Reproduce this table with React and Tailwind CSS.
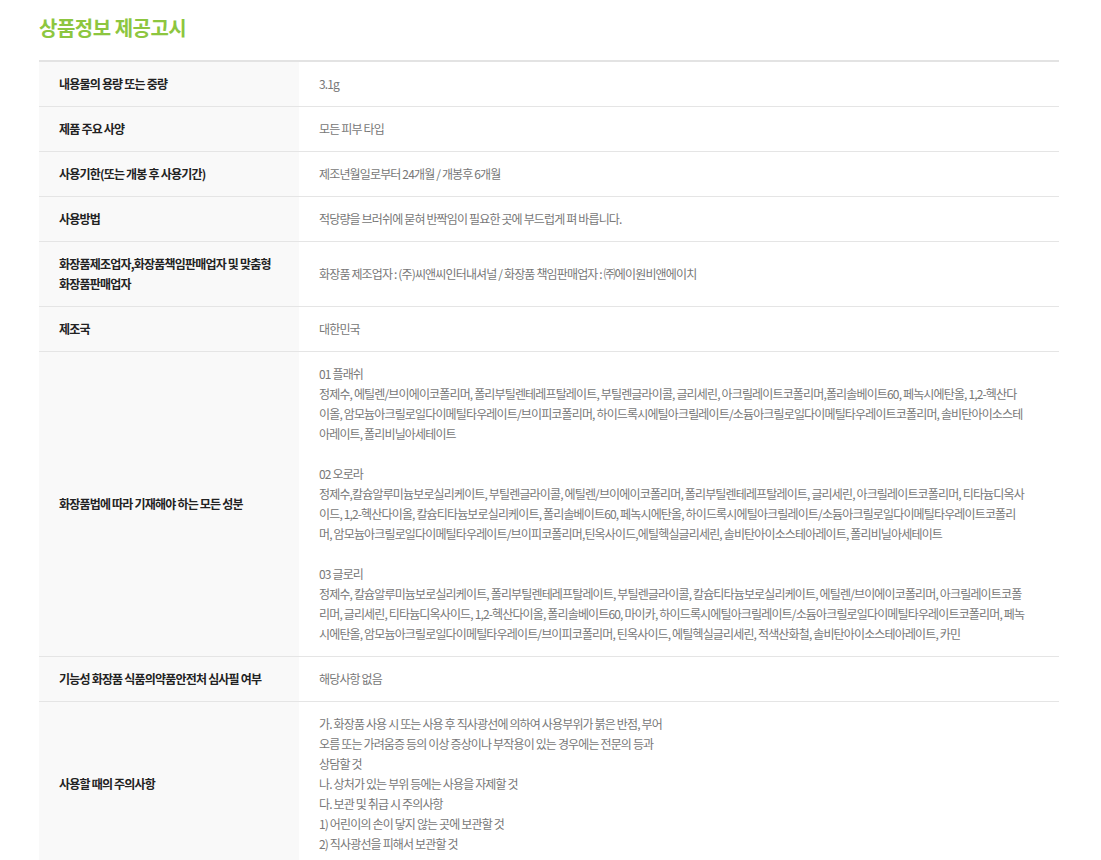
const rows = [
  { label: ['내용물의 용량 또는 중량'], value: ['3.1g'] },
  { label: ['제품 주요 사양'], value: ['모든 피부 타입'] },
  { label: ['사용기한(또는 개봉 후 사용기간)'], value: ['제조년월일로부터 24개월 / 개봉후 6개월'] },
  { label: ['사용방법'], value: ['적당량을 브러쉬에 묻혀 반짝임이 필요한 곳에 부드럽게 펴 바릅니다.'] },
  {
    label: ['화장품제조업자,화장품책임판매업자 및 맞춤형', '화장품판매업자'],
    value: ['화장품 제조업자 : (주)씨앤씨인터내셔널 / 화장품 책임판매업자 : ㈜에이원비앤에이치'],
  },
  { label: ['제조국'], value: ['대한민국'] },
  {
    label: ['화장품법에 따라 기재해야 하는 모든 성분'],
    value: [
      '01 플래쉬',
      '정제수, 에틸렌/브이에이코폴리머, 폴리부틸렌테레프탈레이트, 부틸렌글라이콜, 글리세린, 아크릴레이트코폴리머,폴리솔베이트60, 페녹시에탄올, 1,2-헥산다',
      '이올, 암모늄아크릴로일다이메틸타우레이트/브이피코폴리머, 하이드록시에틸아크릴레이트/소듐아크릴로일다이메틸타우레이트코폴리머, 솔비탄아이소스테',
      '아레이트, 폴리비닐아세테이트',
      '',
      '02 오로라',
      '정제수,칼슘알루미늄보로실리케이트, 부틸렌글라이콜, 에틸렌/브이에이코폴리머, 폴리부틸렌테레프탈레이트, 글리세린, 아크릴레이트코폴리머, 티타늄디옥사',
      '이드, 1,2-헥산다이올, 칼슘티타늄보로실리케이트, 폴리솔베이트60, 페녹시에탄올, 하이드록시에틸아크릴레이트/소듐아크릴로일다이메틸타우레이트코폴리',
      '머, 암모늄아크릴로일다이메틸타우레이트/브이피코폴리머,틴옥사이드,에틸헥실글리세린, 솔비탄아이소스테아레이트, 폴리비닐아세테이트',
      '',
      '03 글로리',
      '정제수, 칼슘알루미늄보로실리케이트, 폴리부틸렌테레프탈레이트, 부틸렌글라이콜, 칼슘티타늄보로실리케이트, 에틸렌/브이에이코폴리머, 아크릴레이트코폴',
      '리머, 글리세린, 티타늄디옥사이드, 1,2-헥산다이올, 폴리솔베이트60, 마이카, 하이드록시에틸아크릴레이트/소듐아크릴로일다이메틸타우레이트코폴리머, 페녹',
      '시에탄올, 암모늄아크릴로일다이메틸타우레이트/브이피코폴리머, 틴옥사이드, 에틸헥실글리세린, 적색산화철, 솔비탄아이소스테아레이트, 카민',
    ],
  },
  { label: ['기능성 화장품 식품의약품안전처 심사필 여부'], value: ['해당사항 없음'] },
  {
    label: ['사용할 때의 주의사항'],
    value: [
      '가. 화장품 사용 시 또는 사용 후 직사광선에 의하여 사용부위가 붉은 반점, 부어',
      '오름 또는 가려움증 등의 이상 증상이나 부작용이 있는 경우에는 전문의 등과',
      '상담할 것',
      '나. 상처가 있는 부위 등에는 사용을 자제할 것',
      '다. 보관 및 취급 시 주의사항',
      '1) 어린이의 손이 닿지 않는 곳에 보관할 것',
      '2) 직사광선을 피해서 보관할 것',
    ],
  },
];

export default function App() {
  return (
    <div className="min-h-screen bg-white px-[39px] pt-[14px] font-['Noto_Sans_CJK_KR','Noto_Sans',sans-serif]">
      <h2 className="m-0 mb-[18px] h-[28px] text-[20px] leading-[28px] font-bold text-[#8dc63f] tracking-[-0.5px]">
        상품정보 제공고시
      </h2>

      <div className="w-[1020px] border-t-2 border-[#e3e3e3]">
        {rows.map((row, i) => (
          <div key={i} className="flex border-b border-[#e5e5e5]">
            <div className="w-[260px] shrink-0 bg-[#f9f9f9] px-5 py-3 flex flex-col justify-center text-[12px] leading-[20px] font-bold text-[#222] tracking-[-0.8px]">
              {row.label.map((l, j) => (
                <div key={j} className="whitespace-nowrap">{l}</div>
              ))}
            </div>
            <div className="flex-1 bg-white px-5 py-3 flex flex-col justify-center text-[12px] leading-[20px] text-[#777] tracking-[-0.85px]">
              {row.value.map((v, j) => (
                <div key={j} className="whitespace-nowrap h-[20px]">{v}</div>
              ))}
            </div>
          </div>
        ))}
      </div>
    </div>
  );
}
